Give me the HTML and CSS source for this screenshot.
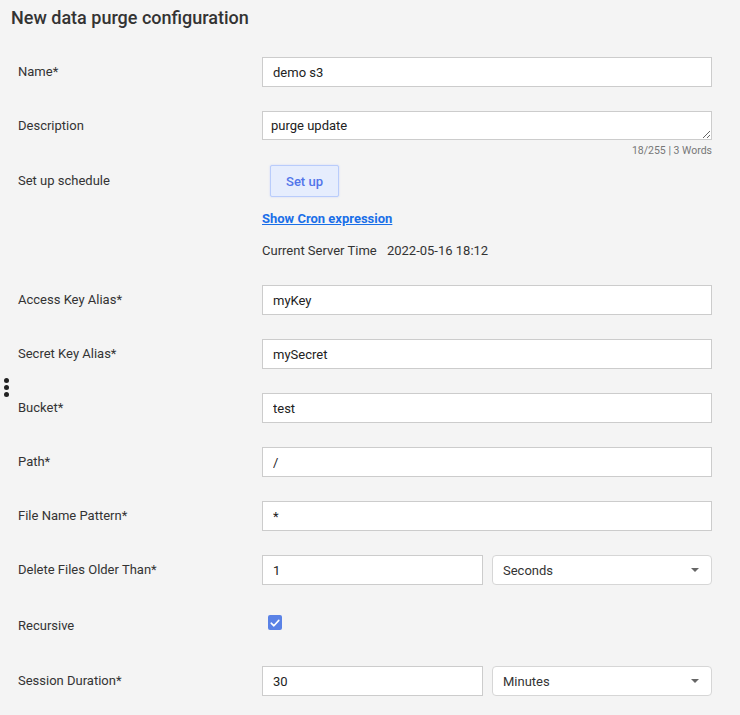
FILE: index.html
```html
<!DOCTYPE html>
<html lang="en">
<head>
    <meta charset="UTF-8">
    <title>New data purge configuration</title>
    <link rel="stylesheet" href="styles.css">
</head>
<body>
    <div class="drag-handle"><span></span><span></span><span></span></div>

    <h1 class="page-title">New data purge configuration</h1>

    <form class="purge-form">
        <div class="form-row">
            <label class="form-label">Name*</label>
            <input class="text-input" type="text" value="demo s3">
        </div>

        <div class="form-row top">
            <label class="form-label">Description</label>
            <div class="field">
                <textarea class="text-area" rows="1">purge update</textarea>
                <div class="counter">18/255 | 3 Words</div>
            </div>
        </div>

        <div class="form-row schedule">
            <label class="form-label">Set up schedule</label>
            <div class="field">
                <button type="button" class="setup-btn">Set up</button>
            </div>
        </div>

        <div class="form-row plain">
            <span class="form-label"></span>
            <a href="#" class="cron-link">Show Cron expression</a>
        </div>

        <div class="form-row plain server-time">
            <span class="form-label"></span>
            <div class="field">Current Server Time <span class="time-value">2022-05-16 18:12</span></div>
        </div>

        <div class="form-row">
            <label class="form-label">Access Key Alias*</label>
            <input class="text-input" type="text" value="myKey">
        </div>

        <div class="form-row">
            <label class="form-label">Secret Key Alias*</label>
            <input class="text-input" type="text" value="mySecret">
        </div>

        <div class="form-row">
            <label class="form-label">Bucket*</label>
            <input class="text-input" type="text" value="test">
        </div>

        <div class="form-row">
            <label class="form-label">Path*</label>
            <input class="text-input" type="text" value="/">
        </div>

        <div class="form-row">
            <label class="form-label">File Name Pattern*</label>
            <input class="text-input" type="text" value="*">
        </div>

        <div class="form-row">
            <label class="form-label">Delete Files Older Than*</label>
            <div class="split">
                <input class="text-input" type="text" value="1">
                <div class="select-box">Seconds <span class="caret"></span></div>
            </div>
        </div>

        <div class="form-row recursive">
            <label class="form-label">Recursive</label>
            <div class="field">
                <span class="checkbox">
                    <svg width="14" height="14" viewBox="0 0 14 14"><path d="M3.2 7.2 L5.9 9.8 L10.8 4.4" fill="none" stroke="#fff" stroke-width="1.6" stroke-linecap="round" stroke-linejoin="round"/></svg>
                </span>
            </div>
        </div>

        <div class="form-row">
            <label class="form-label">Session Duration*</label>
            <div class="split">
                <input class="text-input" type="text" value="30">
                <div class="select-box">Minutes <span class="caret"></span></div>
            </div>
        </div>
    </form>
</body>
</html>
```

FILE: styles.css
```css
body {
    margin: 0;
    background: #f4f4f4;
    font-family: Roboto, "Liberation Sans", sans-serif;
    color: #333;
    font-size: 13px;
}

.page-title {
    margin: 0;
    padding: 7px 0 0 11px;
    height: 29px;
    font-size: 18px;
    font-weight: 500;
    color: #333;
    line-height: 22px;
}

.drag-handle {
    position: absolute;
    left: 4px;
    top: 378px;
    display: flex;
    flex-direction: column;
    gap: 2px;
}

.drag-handle span {
    width: 5px;
    height: 5px;
    border-radius: 50%;
    background: #222;
}

.purge-form {
    padding: 21px 0 0 18px;
}

.form-row {
    display: grid;
    grid-template-columns: 244px 450px;
    align-items: center;
    margin-bottom: 24px;
}

.form-row.top {
    align-items: start;
    margin-bottom: 5px;
}

.form-row.top .form-label {
    line-height: 29px;
}

.form-label {
    line-height: 16px;
}

.text-input,
.text-area {
    box-sizing: border-box;
    width: 100%;
    height: 30px;
    margin: 0;
    padding: 0 10px;
    border: 1px solid #ccc;
    background: #fff;
    font-family: inherit;
    font-size: 13px;
    color: #222;
    outline: none;
}

.text-area {
    display: block;
    height: 29px;
    padding: 5px 8px;
    line-height: 17px;
    resize: vertical;
    overflow: hidden;
}

.counter {
    padding-top: 1px;
    text-align: right;
    font-size: 10.5px;
    color: #777;
    line-height: 19px;
}

.schedule {
    margin-bottom: 14px;
}

.setup-btn {
    margin-left: 8px;
    width: 69px;
    height: 32px;
    border: 1px solid #b9ccfb;
    border-radius: 2px;
    background: #e6edfd;
    color: #5275ea;
    font-family: inherit;
    font-size: 13px;
    font-weight: 500;
    box-shadow: 0 0 2px rgba(120, 150, 250, 0.35);
}

.plain {
    margin-bottom: 16px;
}

.cron-link {
    color: #1a6fe8;
    font-weight: 700;
    line-height: 16px;
    justify-self: start;
}

.server-time {
    margin-bottom: 27px;
}

.time-value {
    margin-left: 7px;
}

.split {
    display: grid;
    grid-template-columns: 221px 220px;
    gap: 9px;
}

.select-box {
    box-sizing: border-box;
    height: 30px;
    padding: 0 10px;
    border: 1px solid #d6d6d6;
    border-radius: 4px;
    background: #fff;
    display: flex;
    align-items: center;
    justify-content: space-between;
    color: #333;
}

.caret {
    width: 0;
    height: 0;
    border-left: 4px solid transparent;
    border-right: 4px solid transparent;
    border-top: 4px solid #666;
    margin-right: 2px;
}

.recursive {
    align-items: start;
    height: 33px;
}

.recursive .form-label {
    padding-top: 9px;
}

.checkbox {
    display: flex;
    align-items: center;
    justify-content: center;
    width: 14px;
    height: 15px;
    margin: 6px 0 0 6px;
    border-radius: 2px;
    background: #5a82e6;
}
```
